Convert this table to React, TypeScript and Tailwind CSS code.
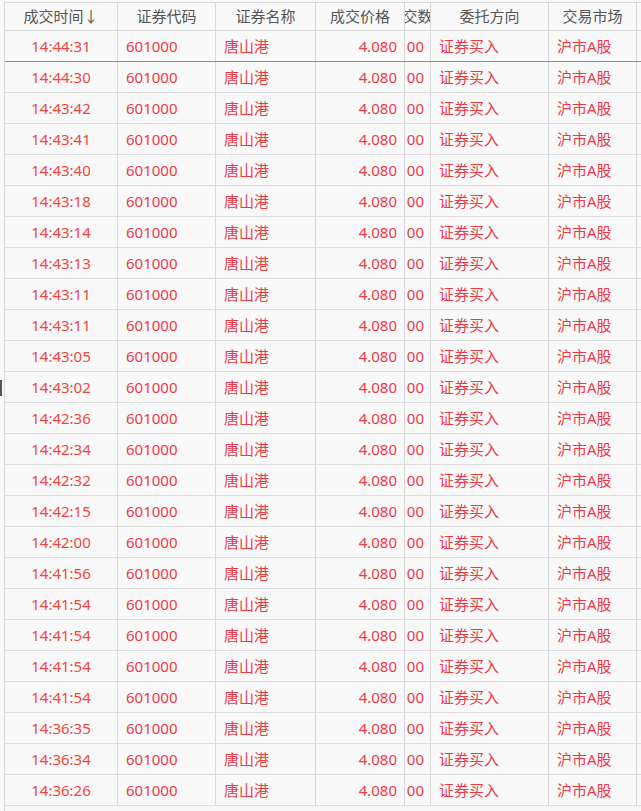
const rows = [
  "14:44:31", "14:44:30", "14:43:42", "14:43:41", "14:43:40", "14:43:18", "14:43:14",
  "14:43:13", "14:43:11", "14:43:11", "14:43:05", "14:43:02", "14:42:36", "14:42:34",
  "14:42:32", "14:42:15", "14:42:00", "14:41:56", "14:41:54", "14:41:54", "14:41:54",
  "14:41:54", "14:36:35", "14:36:34", "14:36:26",
];

const cols = "grid grid-cols-[113px_98px_100px_89px_26px_118px_88px_5px]";
const cell = "border-r border-[#d9d9d9] h-full flex items-center overflow-hidden whitespace-nowrap";

const headers = ["成交时间↓", "证券代码", "证券名称", "成交价格", "成交数量", "委托方向", "交易市场"];

const App = () => {
  return (
    <div
      className="relative w-[641px] h-[811px] overflow-hidden bg-[#f9f9f9] pt-[2px] text-[15px]"
      style={{ fontFamily: '"Noto Sans", "Noto Sans CJK SC", sans-serif' }}
    >
      <div className="ml-[4px] w-[637px] h-[809px] border-l border-t border-[#d9d9d9]">
        <div className={`${cols} h-[28px] border-b border-[#d9d9d9] text-[#555]`}>
          {headers.map((h) => (
            <div key={h} className={`${cell} justify-center`}>
              {h}
            </div>
          ))}
          <div />
        </div>

        {rows.map((t, i) => (
          <div
            key={i}
            className={`${cols} h-[31px] border-b ${i === 0 ? "border-[#8c8c8c]" : "border-[#dedede]"}`}
          >
            <div className={`${cell} justify-center text-[#f0473c]`}>{t}</div>
            <div className={`${cell} pl-[8px] text-[#ee3a47]`}>601000</div>
            <div className={`${cell} pl-[8px] text-[#ee3a47]`}>唐山港</div>
            <div className={`${cell} justify-end pr-[7px] text-[#ee3a47]`}>4.080</div>
            <div className={`${cell} justify-end pr-[6px] text-[#ee3a47]`}>100</div>
            <div className={`${cell} pl-[8px] text-[#ee3a47]`}>证券买入</div>
            <div className={`${cell} pl-[8px] text-[#ee3a47]`}>沪市A股</div>
            <div />
          </div>
        ))}
      </div>
      <div className="absolute left-0 top-[380px] w-[2px] h-[16px] bg-[#555]" />
    </div>
  );
};

export default App;
